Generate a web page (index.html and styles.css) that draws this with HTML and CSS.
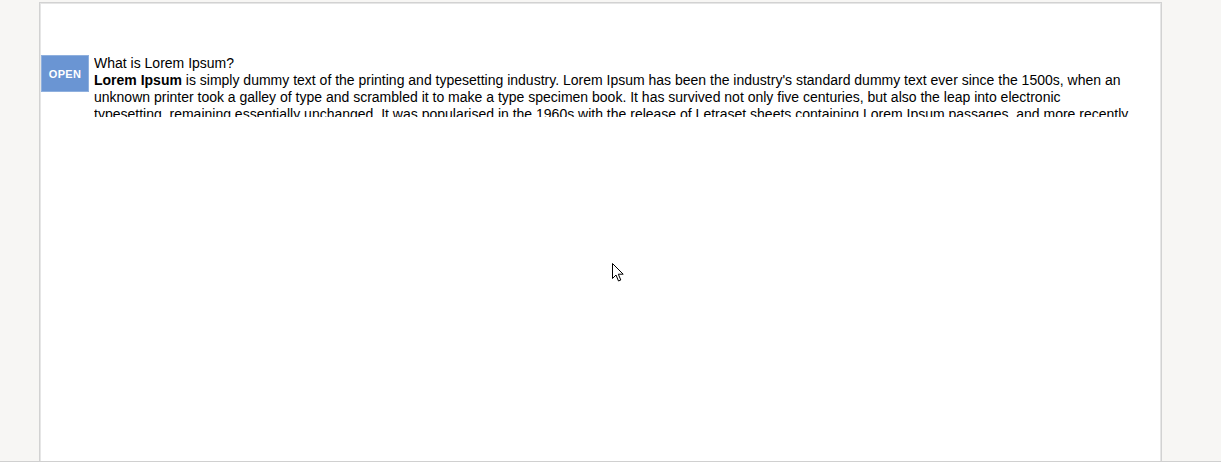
FILE: index.html
```html
<!DOCTYPE html>
<html>
<head>
<meta charset="utf-8">
<link rel="stylesheet" href="styles.css">
</head>
<body>
<div class="frame">
  <div class="row">
    <div class="open-btn">OPEN</div>
    <div class="content">
      <div class="title">What is Lorem Ipsum?</div>
      <div class="body"><strong>Lorem Ipsum</strong> is simply dummy text of the printing and typesetting industry. Lorem Ipsum has been the industry's standard dummy text ever since the 1500s, when an unknown printer took a galley of type and scrambled it to make a type specimen book. It has survived not only five centuries, but also the leap into electronic typesetting, remaining essentially unchanged. It was popularised in the 1960s with the release of Letraset sheets containing Lorem Ipsum passages, and more recently with desktop publishing software like Aldus PageMaker including versions of Lorem Ipsum.</div>
    </div>
  </div>
  <svg class="cursor" width="13" height="20" viewBox="0 0 13 20"><path d="M0.5 0.5 L0.5 15.5 L4 12 L6.5 18 L8.8 17 L6.3 11.2 L11.2 11.2 Z" fill="#fff" stroke="#000" stroke-width="1"/></svg>
</div>
<div class="window-edge"></div>
</body>
</html>
```
FILE: styles.css
```css
html, body {
  margin: 0;
  padding: 0;
  background: #f7f6f4;
  height: 100%;
  overflow: hidden;
}
.frame {
  position: relative;
  box-sizing: border-box;
  margin: 2px 0 0 39px;
  width: 1123px;
  height: 470px;
  background: #fff;
  border: 1px solid #d2d2d2;
  box-shadow: inset 1px 1px 0 #e6e6e6, inset -1px 0 0 #e6e6e6;
  padding-top: 52px;
  font-family: "Liberation Sans", Arial, sans-serif;
  color: #000;
}
.row {
  display: flex;
  align-items: flex-start;
  padding-left: 1px;
}
.open-btn {
  box-sizing: border-box;
  width: 48px;
  height: 37px;
  flex: none;
  background: #6a95d3;
  border: 1px solid #8fb0de;
  color: #fff;
  font-size: 11px;
  font-weight: bold;
  letter-spacing: 0.3px;
  display: flex;
  align-items: center;
  justify-content: center;
}
.content {
  margin-left: 5px;
  width: 1035px;
  height: 62px;
  overflow: hidden;
  font-size: 14px;
  line-height: 17px;
}
.body strong {
  font-weight: bold;
}
.cursor {
  position: absolute;
  left: 572px;
  top: 260px;
}
.window-edge {
  position: fixed;
  left: 0;
  right: 0;
  bottom: 0;
  height: 1px;
  background: #d0d0d0;
}
```
